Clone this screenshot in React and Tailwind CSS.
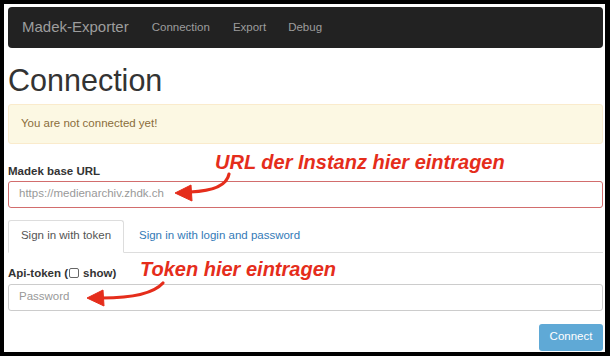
import React from 'react';

// Red hand-drawn style arrow (annotation overlay)
function Arrow({ className, w, h, d, tip }) {
    return (
        <svg className={className} width={w} height={h} viewBox={`0 0 ${w} ${h}`} fill="none">
            <path d={d} stroke="#e52d1b" strokeWidth="3.2" strokeLinecap="round" fill="none" />
            <polygon points={tip} fill="#e52d1b" strokeLinejoin="round" stroke="#e52d1b" strokeWidth="1" />
        </svg>
    );
}

export default function App() {
    return (
        <div className="w-[610px] h-[356px] bg-black pt-[4px] pl-[4px] pr-[5px] pb-[4px] font-['Liberation_Sans',Arial,sans-serif]">
            <div className="relative h-full bg-white pt-[3px] pl-[4px] pr-[2px]">
                {/* Navbar */}
                <nav className="h-[41px] bg-[#222] rounded-[4px] flex items-center pl-[14px] text-[#9d9d9d]">
                    <span className="text-[15px] mr-[23px]">Madek-Exporter</span>
                    <span className="text-[11.5px] mr-[23px]">Connection</span>
                    <span className="text-[11.5px] mr-[22px]">Export</span>
                    <span className="text-[11.5px]">Debug</span>
                </nav>

                <h1 className="mt-[17px] text-[30.5px] leading-none text-[#333]">Connection</h1>

                {/* Alert */}
                <div className="mt-[8px] h-[40px] flex items-center px-[12px] bg-[#fcf8e3] border border-[#faebcc] rounded-[3px] text-[11.5px] text-[#8a6d3b]">
                    You are not connected yet!
                </div>

                <label className="block mt-[19px] text-[11.5px] leading-[16px] font-bold text-[#333]">Madek base URL</label>
                <div className="mt-[2px] h-[27px] flex items-center px-[10px] border border-[#d26d6d] rounded-[3px] text-[11.5px] text-[#999]">
                    https://medienarchiv.zhdk.ch
                </div>

                {/* Tabs */}
                <div className="mt-[12px] flex border-b border-[#ddd] h-[33px]">
                    <div className="w-[116px] -mb-px flex items-center justify-center border border-[#ddd] border-b-white rounded-t-[3px] bg-white text-[11.5px] text-[#555]">
                        Sign in with token
                    </div>
                    <div className="flex items-center pl-[15px] text-[11.5px] text-[#337ab7]">
                        Sign in with login and password
                    </div>
                </div>

                <label className="flex items-center mt-[12px] text-[11.5px] leading-[16px] font-bold text-[#333]">
                    Api-token (
                    <span className="inline-block w-[10px] h-[10px] ml-[1px] mr-[4px] border border-[#666] rounded-[2px] bg-white"></span>
                    show)
                </label>
                <div className="mt-[3px] h-[27px] flex items-center px-[10px] border border-[#ccc] rounded-[3px] text-[11.5px] text-[#999]">
                    Password
                </div>

                <div className="flex justify-end mt-[13px]">
                    <button className="w-[64px] h-[27px] rounded-[3px] bg-[#5fa9d6] text-white text-[11.5px]">Connect</button>
                </div>

                {/* Annotations */}
                <div className="absolute left-[211px] top-[148px] text-[20px] font-bold italic text-[#e52d1b] leading-none">
                    URL der Instanz hier eintragen
                </div>
                <Arrow
                    className="absolute left-[168px] top-[166px]"
                    w={62}
                    h={32}
                    d="M57 4 C 55 15, 42 21, 18 22"
                    tip="3,23 19,15 20,31"
                />
                <div className="absolute left-[136px] top-[255px] text-[20px] font-bold italic text-[#e52d1b] leading-none">
                    Token hier eintragen
                </div>
                <Arrow
                    className="absolute left-[80px] top-[275px]"
                    w={84}
                    h={30}
                    d="M79 4 C 70 14, 50 19, 18 19"
                    tip="3,19 19,11 20,27"
                />
            </div>
        </div>
    );
}
